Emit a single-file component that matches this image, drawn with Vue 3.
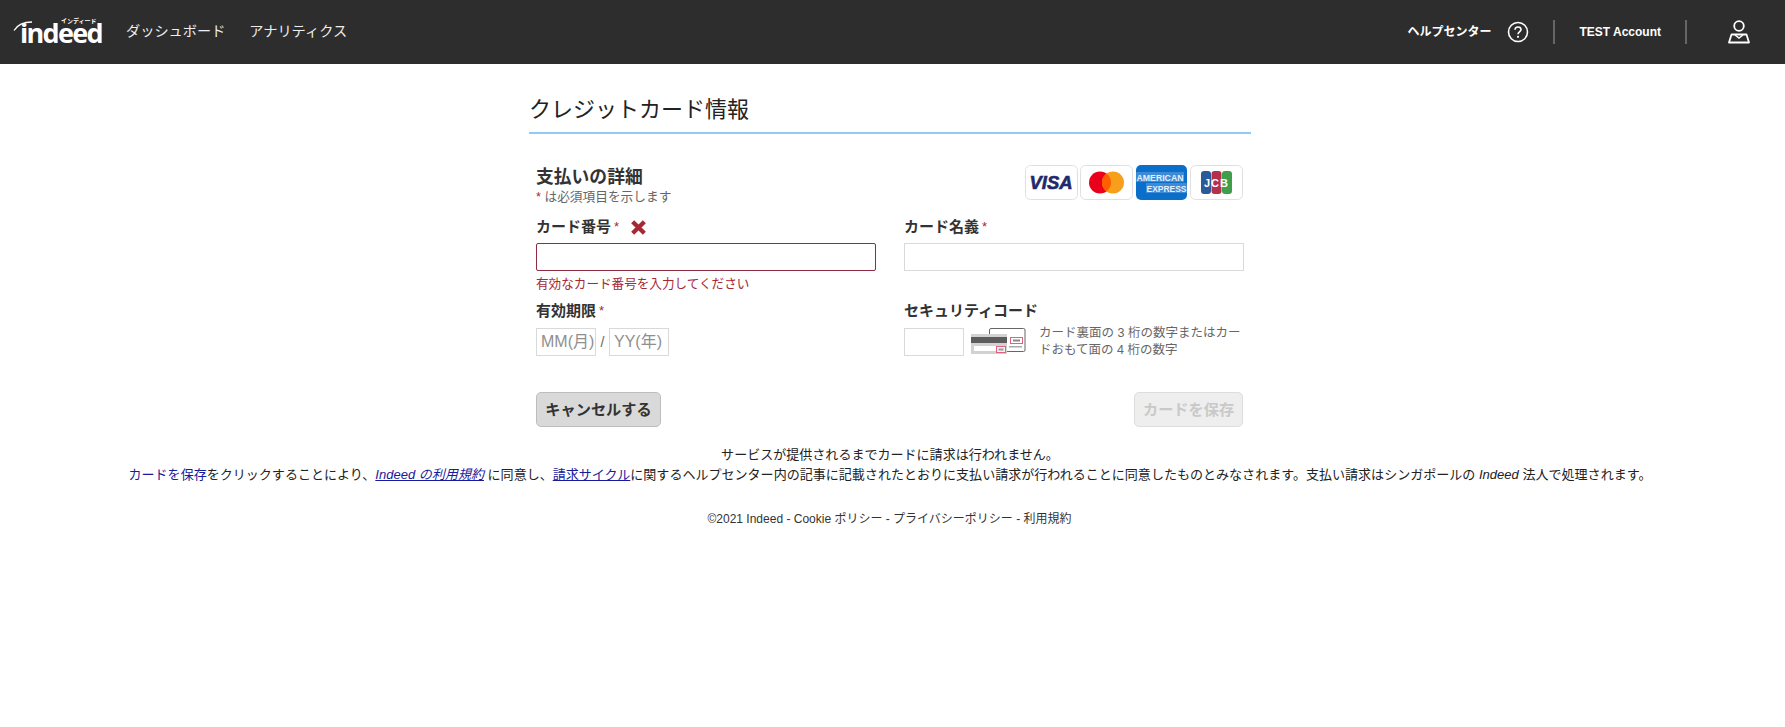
<script setup>
const helpLabel = 'ヘルプセンター'
</script>

<template>
  <div class="page">
    <header class="topbar">
      <div class="logo">
        <svg class="logo-arc" width="20" height="10" viewBox="0 0 20 10"><path d="M1 9.500C4 4.500 10 1 19 1" fill="none" stroke="#fff" stroke-width="1.300"/></svg>
        <span class="logo-kana">インディード</span>
        <span class="logo-word">indeed</span>
      </div>
      <nav class="nav">
        <span>ダッシュボード</span>
        <span>アナリティクス</span>
      </nav>
      <div class="right">
        <span class="help">{{ helpLabel }}</span>
        <svg class="help-icon" width="22" height="22" viewBox="0 0 22 22">
          <circle cx="11" cy="11" r="9.500" fill="none" stroke="#fff" stroke-width="1.600"/>
          <path d="M8 8.800C8 6.900 9.400 6 11 6s3 1 3 2.600c0 2.300-3 2.400-3 4.700" fill="none" stroke="#fff" stroke-width="1.600"/>
          <circle cx="11" cy="15.800" r="1.100" fill="#fff"/>
        </svg>
        <span class="divider first"></span>
        <span class="account">TEST Account</span>
        <span class="divider second"></span>
        <svg class="user-icon" width="22" height="24" viewBox="0 0 22 24">
          <circle cx="11" cy="6" r="4.800" fill="none" stroke="#fff" stroke-width="1.800"/>
          <path d="M3.500 14.500h15L21 22.500H1Z" fill="none" stroke="#fff" stroke-width="1.800" stroke-linejoin="round"/>
          <path d="M7 15l4 3 4-3" fill="none" stroke="#fff" stroke-width="1.400"/>
        </svg>
      </div>
    </header>

    <main class="column">
      <h1 class="title">クレジットカード情報</h1>
      <form class="form" @submit.prevent>
        <div class="details">
          <div class="details-text">
            <h2 class="section">支払いの詳細</h2>
            <p class="note"><span class="star">*</span> は必須項目を示します</p>
          </div>
          <div class="cards">
            <svg class="card" viewBox="0 0 53 35"><rect x=".5" y=".5" width="52" height="34" rx="5" fill="#fff" stroke="#e0e0e0"/><text x="26" y="24" text-anchor="middle" textLength="43" lengthAdjust="spacingAndGlyphs" class="visa">VISA</text></svg>
            <svg class="card" viewBox="0 0 53 35"><rect x=".5" y=".5" width="52" height="34" rx="5" fill="#fff" stroke="#e0e0e0"/><circle cx="20" cy="17.500" r="11" fill="#eb001b"/><circle cx="33" cy="17.500" r="11" fill="#f79e1b"/><path d="M26.500 8.600a11 11 0 0 1 0 17.800a11 11 0 0 1 0-17.800Z" fill="#ff5f00"/></svg>
            <svg class="card amex" viewBox="0 0 51 35"><rect width="51" height="35" rx="5" fill="#0b6fc9"/><rect x="0" y="7" width="48" height="10" fill="#3d8ad6"/><rect x="10" y="18" width="41" height="10" fill="#3d8ad6"/><text x="0.500" y="15.500" textLength="47" lengthAdjust="spacingAndGlyphs" class="amex-text">AMERICAN</text><text x="10.500" y="26.500" textLength="40" lengthAdjust="spacingAndGlyphs" class="amex-text">EXPRESS</text></svg>
            <svg class="card" viewBox="0 0 53 35"><rect x=".5" y=".5" width="52" height="34" rx="5" fill="#fff" stroke="#e0e0e0"/><rect x="11" y="6" width="10" height="23" rx="3" fill="#2b5a9a"/><rect x="21.500" y="6" width="10" height="23" rx="3" fill="#b5304a"/><rect x="32" y="6" width="10" height="23" rx="3" fill="#3f9e4a"/><text x="26.500" y="21.500" text-anchor="middle" class="jcb">JCB</text></svg>
          </div>
        </div>

        <div class="grid">
          <div class="field">
            <label class="label">カード番号 <span class="star">*</span>
              <svg class="cross" width="17" height="17" viewBox="0 0 16 16"><path d="M2.500 2.500 13.500 13.500M13.500 2.500 2.500 13.500" stroke="#a52834" stroke-width="4"/></svg>
            </label>
            <input class="input invalid" type="text" />
            <p class="error">有効なカード番号を入力してください</p>
          </div>
          <div class="field">
            <label class="label">カード名義 <span class="star">*</span></label>
            <input class="input" type="text" />
          </div>
          <div class="field lower">
            <label class="label">有効期限 <span class="star">*</span></label>
            <div class="date">
              <input class="input short" type="text" placeholder="MM(月)" />
              <span class="slash">/</span>
              <input class="input short" type="text" placeholder="YY(年)" />
            </div>
          </div>
          <div class="field lower">
            <label class="label">セキュリティコード</label>
            <div class="cvv">
              <input class="input short" type="text" />
              <svg class="cvv-art" width="55" height="27" viewBox="0 0 55 27">
                <rect x="18.500" y=".5" width="35.500" height="23" rx="1.500" fill="#fff" stroke="#666"/>
                <rect x="39.500" y="9.500" width="12" height="6" fill="#fff" stroke="#e0607e"/>
                <rect x="42" y="11.500" width="7" height="2" fill="#888"/>
                <rect x="38" y="18" width="13" height="1.500" fill="#aaa"/>
                <rect y="6" width="36" height="20" fill="#d2d2d2"/>
                <rect y="9" width="36" height="6" fill="#5c5c5c"/>
                <rect x="3" y="18" width="30" height="5" fill="#fff"/>
                <rect x="25.500" y="18.500" width="9" height="6" fill="#f4f4f4" stroke="#e0607e"/>
                <rect x="27.500" y="20.500" width="5" height="2" fill="#999"/>
              </svg>
              <p class="cvv-text">カード裏面の 3 桁の数字またはカードおもて面の 4 桁の数字</p>
            </div>
          </div>
        </div>

        <div class="actions">
          <button class="btn cancel" type="button">キャンセルする</button>
          <button class="btn save" type="button" disabled>カードを保存</button>
        </div>
      </form>
    </main>

    <section class="legal">
      <p>サービスが提供されるまでカードに請求は行われません。</p>
      <p><span class="plain-link">カードを保存</span>をクリックすることにより、<a class="link" href="#"><em>Indeed の利用規約</em></a> に同意し、<a class="link" href="#">請求サイクル</a>に関するヘルプセンター内の記事に記載されたとおりに支払い請求が行われることに同意したものとみなされます。支払い請求はシンガポールの <em>Indeed</em> 法人で処理されます。</p>
    </section>

    <footer class="footer">©2021 Indeed - Cookie ポリシー - プライバシーポリシー - 利用規約</footer>
  </div>
</template>

<style>
html, body { margin: 0; background: #fff; }
</style>

<style scoped>
.page {
  font-family: "Liberation Sans", "Noto Sans CJK JP", sans-serif;
  color: #2d2d2d;
  min-height: 727px;
}
.topbar {
  height: 64px;
  background: #2d2d2d;
  color: #fff;
  display: flex;
  align-items: center;
  padding-left: 13px;
}
.logo { position: relative; width: 90px; height: 34px; }
.logo-arc { position: absolute; left: 0; top: 6px; }
.logo-kana { position: absolute; left: 48px; top: 3px; font-size: 6px; line-height: 6px; font-weight: 700; white-space: nowrap; }
.logo-word {
  position: absolute; left: 7px; top: 9.500px;
  font-family: "Open Sans", sans-serif;
  font-size: 27px; line-height: 16px; font-weight: 700; letter-spacing: -1.700px;
}
.nav { display: flex; gap: 24px; margin-left: 23px; font-size: 14.200px; color: #eee; margin-top: -5px; }
.right { margin-left: auto; display: flex; align-items: center; }
.help { font-size: 12px; font-weight: 700; width: 85px; white-space: nowrap; margin-top: -4px; }
.help-icon { margin-left: 15px; }
.divider { width: 2px; height: 24px; background: #666; }
.divider.first { margin-left: 24px; }
.account { font-size: 12px; font-weight: 700; margin-left: 24px; }
.divider.second { margin-left: 24px; }
.user-icon { margin-left: 41px; margin-right: 35px; }

.column { width: 722px; margin-left: 529px; }
.title {
  margin: 0;
  height: 70px;
  padding-top: 30px;
  box-sizing: border-box;
  border-bottom: 2px solid #92c9f5;
  font-size: 22px; line-height: 32px; font-weight: 400; color: #222;
}
.form { padding: 0 7px; }
.details { display: flex; justify-content: space-between; align-items: flex-start; padding-top: 31px; height: 83px; box-sizing: border-box; }
.details-text { padding-top: 2px; }
.section { margin: 0; font-size: 17.800px; line-height: 20px; font-weight: 700; color: #333; }
.note { margin: 2px 0 0; font-size: 12.700px; line-height: 16px; color: #666; }
.star { color: #a52834; }
.cards { display: flex; gap: 2px; margin-right: 1px; }
.card { width: 53px; height: 35px; display: block; }
.card.amex { width: 51px; margin: 0 1px; }
.visa { font: italic 700 18px "Liberation Sans", sans-serif; fill: #1f2a6d; stroke: #1f2a6d; stroke-width: .6px; }
.amex-text { font: 700 8.500px "Liberation Sans", sans-serif; fill: #e3f0fb; }
.jcb { font: 700 11px "Liberation Sans", sans-serif; fill: #fff; letter-spacing: 1px; }

.grid { display: grid; grid-template-columns: 340px 340px; column-gap: 28px; }
.field { min-height: 84px; }
.label { display: flex; align-items: center; gap: 3px; height: 20px; margin-bottom: 6px; font-size: 15px; font-weight: 700; color: #333; line-height: 20px; }
.label .star { font-weight: 400; font-size: 13px; }
.field.lower { min-height: 0; }
.field.lower .label { margin-bottom: 7px; }
.cross { margin-left: 8px; }
.input {
  display: block;
  width: 100%; height: 28px;
  box-sizing: border-box;
  border: 1px solid #d9d9d9;
  padding: 0 0 0 4px;
  font: 16px "Liberation Sans", "Noto Sans CJK JP", sans-serif;
  background: #fff;
  outline: none;
}
.input.invalid { border-color: #8e2b45; border-radius: 2px; }
.input.short { width: 60px; }
.input::placeholder { color: #8f8f8f; opacity: 1; }
.error { margin: 4px 0 0; font-size: 12.600px; line-height: 18px; color: #a52834; white-space: nowrap; }
.date { display: flex; align-items: center; }
.slash { width: 13px; text-align: center; color: #666; font-size: 14px; }
.cvv { display: flex; align-items: flex-start; }
.cvv-art { margin-left: 7px; flex: none; }
.cvv-text { margin: -3px 0 0 13px; width: 204px; font-size: 12.500px; line-height: 17px; color: #666; }
.actions { display: flex; justify-content: space-between; margin-top: 33px; margin-right: 1px; }
.btn {
  height: 35px; box-sizing: border-box; border-radius: 5px; padding: 0 0 3px;
  font: 700 15.200px "Liberation Sans", "Noto Sans CJK JP", sans-serif;
}
.cancel { width: 125px; background: #d9d9d9; border: 1px solid #bdbdbd; color: #333; }
.save { width: 109px; background: #eee; border: 1px solid #ddd; color: #c9c9c9; }

.legal { margin-top: 18px; padding-right: 5px; text-align: center; font-size: 13.040px; line-height: 20px; color: #222; }
.legal p { margin: 0; }
.plain-link { color: #1a1a9c; }
.link { color: #1a1a9c; text-decoration: underline; }
.footer { margin-top: 25px; text-align: center; font-size: 12px; line-height: 18px; color: #333; margin-left: -6px; }
</style>
